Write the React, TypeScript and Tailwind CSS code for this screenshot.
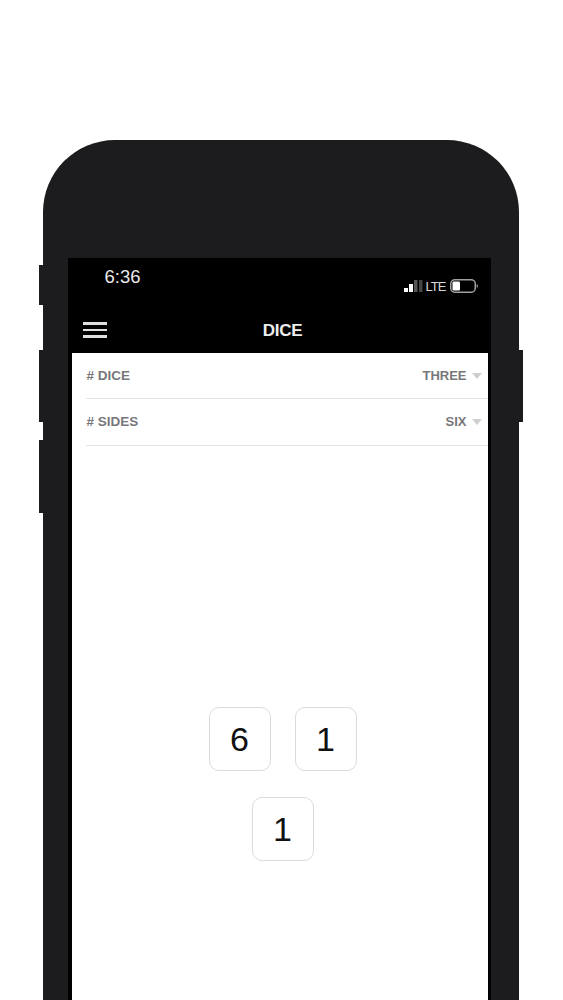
const sans = "font-['Liberation_Sans',Arial,sans-serif]"

function Die({ value }: { value: number }) {
  return (
    <div className="flex h-[64px] w-[62px] items-center justify-center rounded-[10px] border border-[#dcdcdc] bg-white text-[34px] leading-none text-[#111111]">
      {value}
    </div>
  )
}

function SettingRow({ label, value, first }: { label: string; value: string; first?: boolean }) {
  return (
    <div
      className={`flex items-center justify-between border-b border-[#e4e4e4] pr-[6px] font-bold text-[#77777b] ${
        first ? "h-[46px]" : "h-[47px]"
      }`}
    >
      <span className="mt-[1px] pl-[1px] text-[13.5px]">{label}</span>
      <span className="flex items-center gap-[5px] text-[13px]">
        {value}
        <svg width="10" height="6" viewBox="0 0 10 6">
          <path d="M0 0h10L5 6z" fill="#cfcfd2" />
        </svg>
      </span>
    </div>
  )
}

function StatusIcons() {
  return (
    <div className="flex items-center text-[13px] leading-none tracking-[-1px] text-[#d8d8d8]">
      <svg width="19" height="12" viewBox="0 0 19 12" className="mr-[3px]">
        <rect x="0" y="8" width="4" height="4" fill="#ffffff" />
        <rect x="5" y="4" width="4" height="8" fill="#ffffff" />
        <rect x="10" y="0" width="3.5" height="12" fill="#555555" />
        <rect x="15" y="0" width="3.5" height="12" fill="#444444" />
      </svg>
      <span>LTE</span>
      <svg width="28" height="14" viewBox="0 0 28 14" className="ml-[4px]">
        <rect x="0.75" y="0.75" width="24.5" height="12.5" rx="4" fill="none" stroke="#a0a0a0" strokeWidth="1.5" />
        <rect x="2.5" y="2.5" width="7.5" height="9" rx="1" fill="#ffffff" />
        <rect x="26.5" y="5.5" width="1.5" height="3" fill="#777777" />
      </svg>
    </div>
  )
}

export default function App() {
  return (
    <div className={`${sans} h-[1000px] overflow-hidden bg-white px-[43px] pt-[140px]`}>
      <div className="relative h-[860px] w-[476px] rounded-t-[72px] bg-[#1c1b1d] px-[25px] pt-[118px]">
        {/* side buttons */}
        <div className="absolute left-[-4px] top-[125px] h-[40px] w-[4px] bg-[#1c1b1d]" />
        <div className="absolute left-[-4px] top-[210px] h-[72px] w-[4px] bg-[#1c1b1d]" />
        <div className="absolute left-[-4px] top-[300px] h-[73px] w-[4px] bg-[#1c1b1d]" />
        <div className="absolute right-[-4px] top-[210px] h-[72px] w-[4px] bg-[#1c1b1d]" />

        <div className="flex h-[742px] w-[423px] flex-col bg-black px-[3.5px]">
          <div className="flex h-[48px] justify-between pl-[33px] pr-[10px]">
            <span className="mt-[9px] text-[18.5px] leading-[20px] text-[#e8e8e8]">6:36</span>
            <div className="mt-[21px]">
              <StatusIcons />
            </div>
          </div>

          <div className="relative flex h-[47px] items-center justify-center pl-[6px] pt-[2px]">
            <div className="absolute left-[11.5px] top-[16px] flex w-[24px] flex-col gap-[4px]">
              <div className="h-[2.5px] bg-[#e0e0e0]" />
              <div className="h-[2.5px] bg-[#e0e0e0]" />
              <div className="h-[2.5px] bg-[#e0e0e0]" />
            </div>
            <span className="text-[17px] font-bold tracking-[-0.3px] text-[#eeeeee]">DICE</span>
          </div>

          <div className="flex flex-1 flex-col bg-white">
            <div className="pl-[14px]">
              <SettingRow first label="# DICE" value="THREE" />
              <SettingRow label="# SIDES" value="SIX" />
            </div>
            <div className="mt-[261px] flex flex-col items-center gap-[26px] pl-[6px]">
              <div className="flex gap-[24px]">
                <Die value={6} />
                <Die value={1} />
              </div>
              <Die value={1} />
            </div>
          </div>
        </div>
      </div>
    </div>
  )
}
